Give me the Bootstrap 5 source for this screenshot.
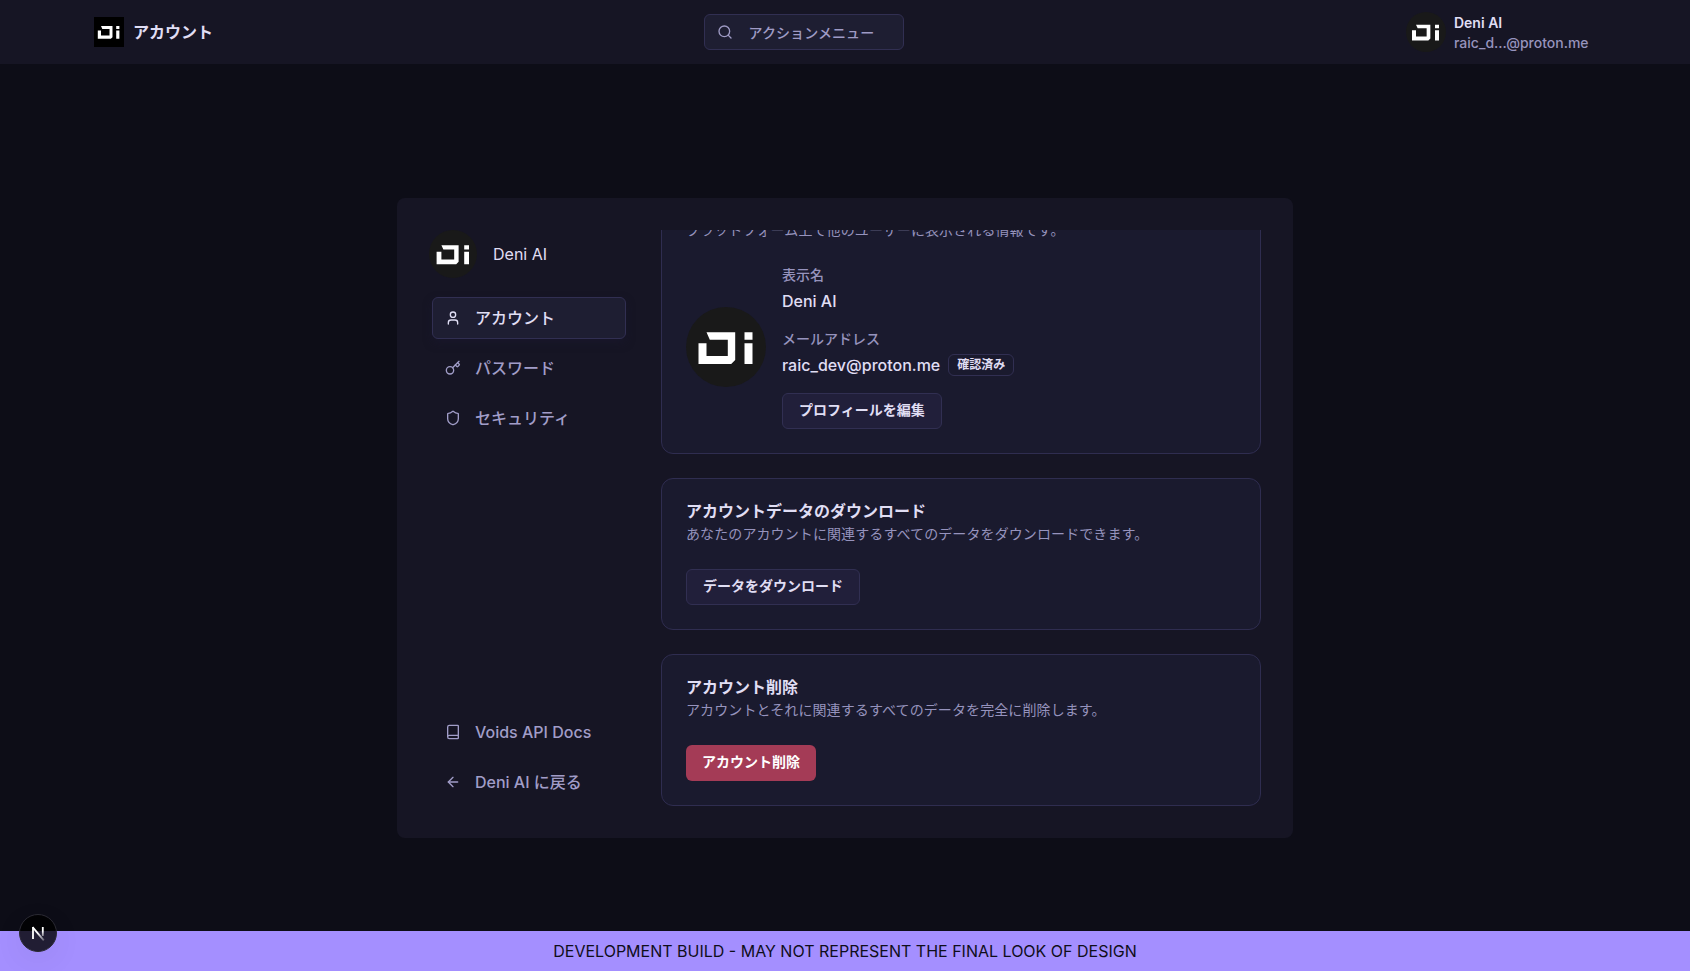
<!DOCTYPE html>
<html lang="ja">
<head>
<meta charset="utf-8">
<meta name="viewport" content="width=device-width, initial-scale=1">
<title>アカウント</title>
<link href="https://cdn.jsdelivr.net/npm/bootstrap@5.3.0/dist/css/bootstrap.min.css" rel="stylesheet">
<style>
  body { font-family: Inter, "Noto Sans CJK JP", sans-serif; font-size: 16px; line-height: 24px; background: #0d0d17; color: #e0def4; }
  .topbar { height: 64px; background: #161524; padding: 0 94px; }
  .search-btn { height: 36px; width: 200px; background: #1e1e32; border: 1px solid #312f52; border-radius: 6px; color: #9f9bc5; padding: 0 12px; gap: 16px; font-weight: 500; letter-spacing: .1px; }
  .search-btn span { padding-top: 1px; }
  .fs-14 { font-size: 14px; line-height: 20px; }
  .fw-500 { font-weight: 500; }
  .soft { color: #9693bd; }
  .user-menu { width: 202px; gap: 8px; padding-left: 12px; }
  .user-text { padding-top: 1px; }
  .lucide { width: 16px; height: 16px; fill: none; stroke: currentColor; stroke-width: 2; stroke-linecap: round; stroke-linejoin: round; flex: none; }
  .logo { flex: none; display: block; }
  .panel { width: 896px; height: 640px; margin-top: 134px; background: #161524; border-radius: 8px; padding: 32px; }
  .side { width: 200px; margin-right: 32px; }
  .side-links { gap: 8px; padding: 3px; }
  .side-link { height: 42px; padding: 0 12px; gap: 14px; border: 1px solid transparent; border-radius: 6px; color: #a19dc8; font-weight: 500; text-decoration: none; }
  .side-link.current { background: #1e1e32; border-color: #312f52; color: #e0def4; box-shadow: 0 4px 8px rgba(26,24,48,.5); }
  .content { width: 600px; gap: 24px; overflow: hidden; }
  .tile { background: #1a1a2e; border: 1px solid #2f2d50; border-radius: 12px; padding: 24px; flex: none; }
  .tile h2 { font-size: 16px; line-height: 16px; font-weight: 600; margin: 0 0 5px; }
  .tile .desc { margin: 0 0 25px; letter-spacing: .1px; }
  .act { height: 36px; padding: 0 16px 2px; border: 1px solid #312f52; border-radius: 6px; background: #211f3a; color: #e0def4; font-size: 14px; line-height: 20px; font-weight: 600; }
  .act:hover { background: #29264a; color: #fff; }
  .act-danger, .act-danger:hover { background: #a43b56; border: 0; color: #fff; }
  .pill { height: 22px; padding: 0 8px; border: 1px solid #312f52; border-radius: 6px; font-size: 12px; line-height: 20px; font-weight: 600; }
  .devbar { height: 40px; background: #a48fff; color: #0f0e1a; }
  .dev-badge { left: 19px; bottom: 19px; width: 38px; height: 38px; border-radius: 50%; background: rgba(0,0,0,.8); border: 1px solid #2b2a33; box-shadow: 0 8px 32px rgba(0,0,0,.06); }
</style>
</head>
<body class="d-flex flex-column vh-100 overflow-hidden">
<svg class="d-none">
  <symbol id="di" viewBox="0 0 80 80">
    <path fill="#fff" d="M20 25.3H48.7V53L44.7 57H12V36.3H20V49H41.3V32.7H23.3ZM58 25.3H66V32.7H58ZM58 36.3H66V57H58Z"/>
  </symbol>
</svg>

<header class="topbar d-flex align-items-center justify-content-between">
  <div class="d-flex align-items-center" style="gap:9px">
    <svg class="logo" width="30" height="30"><rect width="30" height="30" fill="#000"/><use href="#di" x="-1" y="-1" width="32" height="32"/></svg>
    <span class="fw-bold">アカウント</span>
  </div>
  <button class="search-btn d-flex align-items-center fs-14">
    <svg class="lucide" viewBox="0 0 24 24"><circle cx="11" cy="11" r="8"/><path d="m21 21-4.3-4.3"/></svg>
    <span>アクションメニュー</span>
  </button>
  <div class="user-menu d-flex align-items-center">
    <svg class="logo" width="40" height="40"><circle cx="20" cy="20" r="20" fill="#191919"/><use href="#di" width="40" height="40"/></svg>
    <div class="user-text fs-14">
      <div class="fw-semibold">Deni AI</div>
      <div class="soft fw-500">raic_d...@proton.me</div>
    </div>
  </div>
</header>

<main class="flex-grow-1 d-flex justify-content-center">
  <div class="panel d-flex">
    <aside class="side d-flex flex-column">
      <div class="d-flex align-items-center gap-3 mb-3">
        <svg class="logo" width="48" height="48"><circle cx="24" cy="24" r="24" fill="#191919"/><use href="#di" x="0.4" width="48" height="48"/></svg>
        <span>Deni AI</span>
      </div>
      <nav class="side-links d-flex flex-column">
        <a class="side-link current d-flex align-items-center" href="#"><svg class="lucide" viewBox="0 0 24 24"><path d="M19 21v-2a4 4 0 0 0-4-4H9a4 4 0 0 0-4 4v2"/><circle cx="12" cy="7" r="4"/></svg>アカウント</a>
        <a class="side-link d-flex align-items-center" href="#"><svg class="lucide" viewBox="0 0 24 24"><path d="m15.5 7.5 2.3 2.3a1 1 0 0 0 1.4 0l2.1-2.1a1 1 0 0 0 0-1.4L19 4"/><path d="m21 2-9.6 9.6"/><circle cx="7.5" cy="15.5" r="5.5"/></svg>パスワード</a>
        <a class="side-link d-flex align-items-center" href="#"><svg class="lucide" viewBox="0 0 24 24"><path d="M20 13c0 5-3.5 7.5-7.66 8.95a1 1 0 0 1-.67-.01C7.5 20.5 4 18 4 13V6a1 1 0 0 1 1-1c2 0 4.5-1.2 6.24-2.72a1.17 1.17 0 0 1 1.52 0C14.51 3.81 17 5 19 5a1 1 0 0 1 1 1z"/></svg>セキュリティ</a>
      </nav>
      <nav class="side-links d-flex flex-column mt-auto">
        <a class="side-link d-flex align-items-center" href="#"><svg class="lucide" viewBox="0 0 24 24"><path d="M4 19.5v-15A2.5 2.5 0 0 1 6.5 2H19a1 1 0 0 1 1 1v18a1 1 0 0 1-1 1H6.5a1 1 0 0 1 0-5H20"/></svg>Voids API Docs</a>
        <a class="side-link d-flex align-items-center" href="#"><svg class="lucide" viewBox="0 0 24 24"><path d="m12 19-7-7 7-7"/><path d="M19 12H5"/></svg>Deni AI に戻る</a>
      </nav>
    </aside>

    <div class="content d-flex flex-column justify-content-end">
      <section class="tile">
        <p class="desc fs-14 soft">プラットフォーム上で他のユーザーに表示される情報です。</p>
        <div class="d-flex align-items-center gap-3">
          <svg class="logo" width="80" height="80"><circle cx="40" cy="40" r="40" fill="#191919"/><use href="#di" x="0.5" width="80" height="80"/></svg>
          <div class="d-flex flex-column align-items-start gap-3 fw-500">
            <div>
              <div class="fs-14 soft mb-1">表示名</div>
              <div>Deni AI</div>
            </div>
            <div>
              <div class="fs-14 soft mb-1">メールアドレス</div>
              <div class="d-flex align-items-center gap-2" style="height:24px">raic_dev@proton.me <span class="pill">確認済み</span></div>
            </div>
            <button class="act">プロフィールを編集</button>
          </div>
        </div>
      </section>
      <section class="tile">
        <h2>アカウントデータのダウンロード</h2>
        <p class="desc fs-14 soft">あなたのアカウントに関連するすべてのデータをダウンロードできます。</p>
        <button class="act d-block">データをダウンロード</button>
      </section>
      <section class="tile">
        <h2>アカウント削除</h2>
        <p class="desc fs-14 soft">アカウントとそれに関連するすべてのデータを完全に削除します。</p>
        <button class="act act-danger d-block">アカウント削除</button>
      </section>
    </div>
  </div>
</main>

<footer class="devbar d-flex align-items-center justify-content-center">DEVELOPMENT BUILD - MAY NOT REPRESENT THE FINAL LOOK OF DESIGN</footer>
<div class="dev-badge position-fixed d-flex align-items-center justify-content-center">
  <svg width="36" height="36" viewBox="0 0 36 36" fill="none" stroke-width="1.8">
    <defs>
      <linearGradient id="n1" x1="0" y1="12" x2="0" y2="24" gradientUnits="userSpaceOnUse"><stop offset=".35" stop-color="#fff"/><stop offset="1" stop-color="#fff" stop-opacity=".1"/></linearGradient>
      <linearGradient id="n2" x1="18" y1="18" x2="25" y2="26" gradientUnits="userSpaceOnUse"><stop stop-color="#fff"/><stop offset="1" stop-color="#fff" stop-opacity=".2"/></linearGradient>
    </defs>
    <path stroke="#fff" d="M13 24V12"/><path stroke="url(#n2)" d="M12.6 12.2L23.8 25.4"/><path stroke="url(#n1)" d="M22.8 12V21"/>
  </svg>
</div>
<script src="https://cdn.jsdelivr.net/npm/bootstrap@5.3.0/dist/js/bootstrap.bundle.min.js"></script>
</body>
</html>
